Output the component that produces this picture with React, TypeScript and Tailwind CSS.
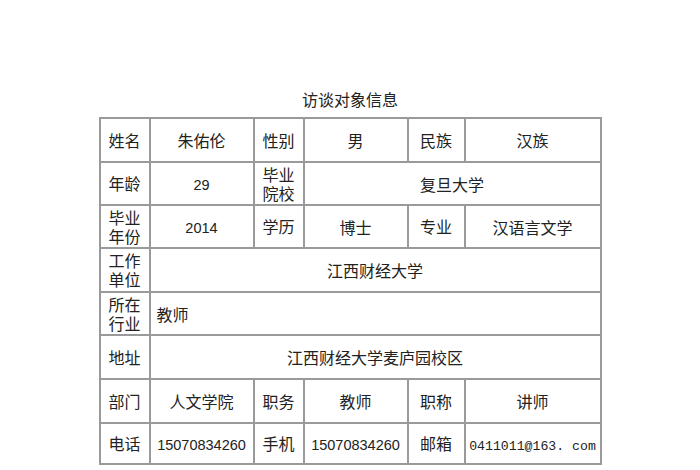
const cell = "border-2 border-[#9a9a9a] text-center align-middle p-0";
const label = `${cell} leading-[19px]`;

function Num({ children }: { children: React.ReactNode }) {
  return <span className="font-['Liberation_Sans',sans-serif] text-[14.5px]">{children}</span>;
}

export default function App() {
  return (
    <div className="h-[470px] w-[700px] overflow-hidden bg-white font-['Noto_Sans_CJK_SC',sans-serif] text-[16px] text-[#222]">
      <h1 className="pt-[89px] text-center text-[16px] font-normal leading-[20px]">访谈对象信息</h1>
      <table className="mx-auto mt-[8px] w-[503px] table-fixed border-collapse">
        <colgroup>
          <col className="w-[50px]" />
          <col className="w-[104px]" />
          <col className="w-[50px]" />
          <col className="w-[104px]" />
          <col className="w-[57px]" />
          <col className="w-[136px]" />
        </colgroup>
        <tbody>
          <tr className="h-[44px]">
            <td className={label}>姓名</td>
            <td className={cell}>朱佑伦</td>
            <td className={label}>性别</td>
            <td className={cell}>男</td>
            <td className={label}>民族</td>
            <td className={cell}>汉族</td>
          </tr>
          <tr className="h-[43px]">
            <td className={label}>年龄</td>
            <td className={cell}><Num>29</Num></td>
            <td className={label}>毕业<br />院校</td>
            <td className={cell} colSpan={3}>复旦大学</td>
          </tr>
          <tr className="h-[43px]">
            <td className={label}>毕业<br />年份</td>
            <td className={cell}><Num>2014</Num></td>
            <td className={label}>学历</td>
            <td className={cell}>博士</td>
            <td className={label}>专业</td>
            <td className={cell}>汉语言文学</td>
          </tr>
          <tr className="h-[44px]">
            <td className={label}>工作<br />单位</td>
            <td className={cell} colSpan={5}>江西财经大学</td>
          </tr>
          <tr className="h-[43px]">
            <td className={label}>所在<br />行业</td>
            <td className={`${cell} !text-left !pl-[6px]`} colSpan={5}>教师</td>
          </tr>
          <tr className="h-[44px]">
            <td className={label}>地址</td>
            <td className={cell} colSpan={5}>江西财经大学麦庐园校区</td>
          </tr>
          <tr className="h-[44px]">
            <td className={label}>部门</td>
            <td className={cell}>人文学院</td>
            <td className={label}>职务</td>
            <td className={cell}>教师</td>
            <td className={label}>职称</td>
            <td className={cell}>讲师</td>
          </tr>
          <tr className="h-[41px]">
            <td className={label}>电话</td>
            <td className={cell}><Num>15070834260</Num></td>
            <td className={label}>手机</td>
            <td className={cell}><Num>15070834260</Num></td>
            <td className={label}>邮箱</td>
            <td className={cell}>
              <span className="font-['Liberation_Mono',monospace] text-[13.2px]">0411011@163. com</span>
            </td>
          </tr>
        </tbody>
      </table>
      <p className="mt-[3px] pl-[104px] text-[13px] leading-[16px] text-[#aaa]">
        说明：1.本表信息由访谈者自主填写，2.本表中所有信息均为真实信息，3.访谈记录将严格保密
      </p>
    </div>
  );
}
